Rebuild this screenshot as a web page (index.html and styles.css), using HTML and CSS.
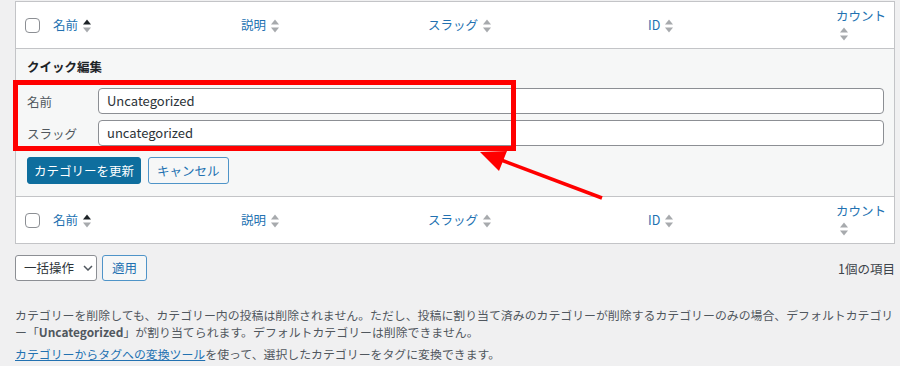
FILE: index.html
```html
<!DOCTYPE html>
<html lang="ja">
<head>
<meta charset="utf-8">
<title>カテゴリー</title>
<link rel="stylesheet" href="styles.css">
</head>
<body>
<div class="wrap">
  <table class="list">
    <colgroup>
      <col class="c-cb"><col class="c-name"><col class="c-desc"><col class="c-slug"><col class="c-id"><col class="c-count">
    </colgroup>
    <thead>
      <tr>
        <td class="cb"><span class="checkbox"></span></td>
        <th><a class="sort">名前<svg class="ind" width="8" height="14" viewBox="0 0 8 14"><polygon class="up on" points="0,5.5 4,0.5 8,5.5"/><polygon class="dn" points="0,8.5 8,8.5 4,13.5"/></svg></a></th>
        <th><a class="sort">説明<svg class="ind" width="8" height="14" viewBox="0 0 8 14"><polygon class="up" points="0,5.5 4,0.5 8,5.5"/><polygon class="dn" points="0,8.5 8,8.5 4,13.5"/></svg></a></th>
        <th><a class="sort">スラッグ<svg class="ind" width="8" height="14" viewBox="0 0 8 14"><polygon class="up" points="0,5.5 4,0.5 8,5.5"/><polygon class="dn" points="0,8.5 8,8.5 4,13.5"/></svg></a></th>
        <th><a class="sort">ID<svg class="ind" width="8" height="14" viewBox="0 0 8 14"><polygon class="up" points="0,5.5 4,0.5 8,5.5"/><polygon class="dn" points="0,8.5 8,8.5 4,13.5"/></svg></a></th>
        <th class="count"><a class="sort"><span class="lbl">カウント</span><svg class="ind blk" width="8" height="14" viewBox="0 0 8 14"><polygon class="up" points="0,5.5 4,0.5 8,5.5"/><polygon class="dn" points="0,8.5 8,8.5 4,13.5"/></svg></a></th>
      </tr>
    </thead>
    <tbody>
      <tr class="qe">
        <td colspan="6">
          <div class="qe-title">クイック編集</div>
          <div class="fields">
            <label class="field"><span class="flabel">名前</span><span class="input">Uncategorized</span></label>
            <label class="field"><span class="flabel">スラッグ</span><span class="input">uncategorized</span></label>
          </div>
          <div class="actions">
            <span class="btn primary">カテゴリーを更新</span>
            <span class="btn secondary">キャンセル</span>
          </div>
        </td>
      </tr>
    </tbody>
    <tfoot>
      <tr>
        <td class="cb"><span class="checkbox"></span></td>
        <th><a class="sort">名前<svg class="ind" width="8" height="14" viewBox="0 0 8 14"><polygon class="up on" points="0,5.5 4,0.5 8,5.5"/><polygon class="dn" points="0,8.5 8,8.5 4,13.5"/></svg></a></th>
        <th><a class="sort">説明<svg class="ind" width="8" height="14" viewBox="0 0 8 14"><polygon class="up" points="0,5.5 4,0.5 8,5.5"/><polygon class="dn" points="0,8.5 8,8.5 4,13.5"/></svg></a></th>
        <th><a class="sort">スラッグ<svg class="ind" width="8" height="14" viewBox="0 0 8 14"><polygon class="up" points="0,5.5 4,0.5 8,5.5"/><polygon class="dn" points="0,8.5 8,8.5 4,13.5"/></svg></a></th>
        <th><a class="sort">ID<svg class="ind" width="8" height="14" viewBox="0 0 8 14"><polygon class="up" points="0,5.5 4,0.5 8,5.5"/><polygon class="dn" points="0,8.5 8,8.5 4,13.5"/></svg></a></th>
        <th class="count"><a class="sort"><span class="lbl">カウント</span><svg class="ind blk" width="8" height="14" viewBox="0 0 8 14"><polygon class="up" points="0,5.5 4,0.5 8,5.5"/><polygon class="dn" points="0,8.5 8,8.5 4,13.5"/></svg></a></th>
      </tr>
    </tfoot>
  </table>

  <div class="tablenav">
    <span class="select">一括操作<svg class="chev" width="10" height="6" viewBox="0 0 10 6"><polyline points="1,1 5,5 9,1"/></svg></span>
    <span class="btn apply">適用</span>
    <span class="items">1個の項目</span>
  </div>

  <div class="notes">
    <p>カテゴリーを削除しても、カテゴリー内の投稿は削除されません。ただし、投稿に割り当て済みのカテゴリーが削除するカテゴリーのみの場合、デフォルトカテゴリー「<strong>Uncategorized</strong>」が割り当てられます。デフォルトカテゴリーは削除できません。</p>
    <p><a class="link">カテゴリーからタグへの変換ツール</a>を使って、選択したカテゴリーをタグに変換できます。</p>
  </div>
</div>

<svg class="annot" width="900" height="366" viewBox="0 0 900 366">
  <rect x="15.5" y="82.5" width="498" height="66" fill="none" stroke="#ff0000" stroke-width="5"/>
  <line x1="602" y1="198" x2="496" y2="158" stroke="#ff0000" stroke-width="3.5"/>
  <polygon points="480,152 507,151 499,171" fill="#ff0000"/>
</svg>
</body>
</html>
```

FILE: styles.css
```css
html, body {
  margin: 0;
  padding: 0;
}
body {
  position: relative;
  background: #f0f0f1;
  font-family: "Noto Sans CJK JP", "Noto Sans", sans-serif;
  font-size: 12.5px;
  color: #3c434a;
  width: 900px;
  height: 366px;
  overflow: hidden;
}
.wrap {
  padding: 1px 5px 0 15px;
}
.list {
  width: 880px;
  table-layout: fixed;
  border-spacing: 0;
  border: 1px solid #c3c4c7;
  background: #fff;
}
.c-cb { width: 27px; }
.c-name { width: 188px; }
.c-desc { width: 187px; }
.c-slug { width: 220px; }
.c-id { width: 188px; }
.c-count { width: 68px; }

.list thead th, .list thead td,
.list tfoot th, .list tfoot td {
  box-sizing: border-box;
  height: 46px;
  padding: 0 10px;
  text-align: left;
  font-weight: normal;
  vertical-align: middle;
  line-height: 16px;
}
.list thead th, .list thead td {
  height: 47px;
  border-bottom: 1px solid #c3c4c7;
}
.list td.cb {
  padding: 0 0 0 9px;
}
.checkbox {
  display: block;
  width: 13px;
  height: 13px;
  border: 1px solid #8c8f94;
  border-radius: 4px;
  background: #fff;
}
.sort {
  color: #2271b1;
  text-decoration: none;
  white-space: nowrap;
}
.ind {
  display: inline-block;
  vertical-align: -3px;
  margin-left: 5px;
}
.ind polygon { fill: #a7aaad; }
.ind polygon.on { fill: #1d2327; }
.list th.count {
  padding-right: 0;
  padding-top: 0;
}
.count .lbl {
  display: block;
  margin-top: -2px;
}
.ind.blk {
  display: block;
  margin: 3px 0 0 4px;
}

.qe td {
  box-sizing: border-box;
  background: #f6f7f7;
  border-bottom: 1px solid #c3c4c7;
  padding: 8px 10px 12px 11px;
}
.qe-title {
  font-weight: bold;
  color: #1d2327;
  line-height: 20px;
}
.fields {
  margin-top: 11px;
  display: flex;
  flex-direction: column;
  gap: 6px;
}
.field {
  display: flex;
  align-items: center;
}
.flabel {
  width: 71px;
  flex: none;
  color: #50575e;
}
.input {
  flex: 1;
  box-sizing: border-box;
  height: 26px;
  line-height: 24px;
  padding: 0 8px;
  border: 1px solid #8c8f94;
  border-radius: 4px;
  background: #fff;
  color: #2c3338;
  font-size: 13px;
}
.actions {
  margin-top: 11px;
  display: flex;
  gap: 7px;
}
.btn {
  box-sizing: border-box;
  display: inline-block;
  height: 27px;
  line-height: 25px;
  border: 1px solid;
  border-radius: 3px;
  white-space: nowrap;
}
.btn.primary {
  background: #0e6e9e;
  border-color: #0e6e9e;
  color: #fff;
  padding: 0 6px;
}
.btn.secondary {
  background: #f6f7f7;
  border-color: #4f94c8;
  color: #2271b1;
  padding: 0 8px;
}

.tablenav {
  margin-top: 11px;
  display: flex;
  align-items: center;
  height: 26px;
}
.select {
  box-sizing: border-box;
  width: 82px;
  height: 26px;
  line-height: 24px;
  border: 1px solid #8c8f94;
  border-radius: 3px;
  background: #fff;
  color: #2c3338;
  padding-left: 8px;
  display: flex;
  align-items: center;
}
.chev {
  margin-left: 9px;
}
.chev polyline {
  fill: none;
  stroke: #50575e;
  stroke-width: 1.5;
}
.btn.apply {
  height: 26px;
  line-height: 24px;
  margin-left: 5px;
  padding: 0 9px;
  background: #f6f7f7;
  border-color: #4f94c8;
  color: #2271b1;
}
.items {
  margin-left: auto;
  color: #3c434a;
}

.notes {
  margin-top: 25px;
  font-size: 11.9px;
  color: #50575e;
  line-height: 17px;
  line-break: loose;
}
.notes p {
  margin: 0 0 5px;
}
.notes strong {
  font-weight: bold;
}
.link {
  color: #2271b1;
  text-decoration: underline;
}

.annot {
  position: absolute;
  left: 0;
  top: 0;
  pointer-events: none;
}
```
